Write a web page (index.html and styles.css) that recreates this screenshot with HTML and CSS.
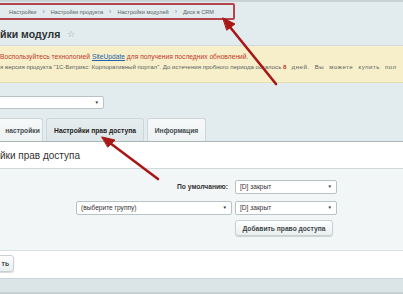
FILE: index.html
```html
<!DOCTYPE html>
<html lang="ru">
<head>
<meta charset="utf-8">
<link rel="stylesheet" href="styles.css">
</head>
<body>
<div class="page">
  <div class="topline"></div>
  <div class="crumbs">
    <div class="crumbbox">
      <span class="crumb">Настройки</span><span class="sep">›</span>
      <span class="crumb">Настройки продукта</span><span class="sep">›</span>
      <span class="crumb">Настройки модулей</span><span class="sep">›</span>
      <span class="crumb">Диск в CRM</span>
    </div>
  </div>
  <div class="titlebar">
    <h1 class="title">йки модуля</h1><span class="star">☆</span>
  </div>
  <div class="notice">
    <p class="warn">Воспользуйтесь технологией <a class="link">SiteUpdate</a> для получения последних обновлений.</p>
    <p class="info">я версия продукта "1С-Битрикс: Корпоративный портал". До истечения пробного периода осталось <b class="days">8</b><span class="tail"> дней. Вы можете купить пол</span></p>
  </div>
  <div class="filter">
    <div class="select site"><span class="arr">▼</span></div>
  </div>
  <div class="tabs">
    <div class="tab first">настройки</div>
    <div class="tab active">Настройки прав доступа</div>
    <div class="tab last">Информация</div>
  </div>
  <div class="panel-head">йки прав доступа</div>
  <div class="form">
    <div class="grid">
      <div class="label">По умолчанию:</div>
      <div class="select">[D] закрыт<span class="arr">▼</span></div>
      <div class="select">(выберите группу)<span class="arr">▼</span></div>
      <div class="select">[D] закрыт<span class="arr">▼</span></div>
      <div></div>
      <div class="btn add">Добавить право доступа</div>
    </div>
  </div>
  <div class="actions">
    <div class="btn save">ть</div>
  </div>
  <div class="bottom"></div>
  <svg class="arrows" width="403" height="294" viewBox="0 0 403 294">
    <g stroke="#a81616" stroke-width="2.6" fill="#a81616" stroke-linecap="round">
      <line x1="276" y1="84" x2="230" y2="27"/>
      <polygon points="223,18 235,24 227,30" stroke-width="1"/>
      <line x1="158" y1="179" x2="110" y2="143"/>
      <polygon points="102,137 115,140 108,147" stroke-width="1"/>
    </g>
  </svg>
</div>
</body>
</html>
```

FILE: styles.css
```css
* { box-sizing: border-box; }
html, body { margin: 0; padding: 0; }
body {
  font-family: "Liberation Sans", Arial, sans-serif;
  background: #e2ebed;
  width: 403px;
  height: 294px;
  overflow: hidden;
}
.page { position: relative; width: 403px; height: 294px; overflow: hidden; }

.topline { height: 2px; background: #c9d2d5; }

.crumbs { height: 18px; padding-top: 1px; }
.crumbbox {
  width: 237px;
  height: 17px;
  margin-left: -2px;
  border: 2px solid #b3454c;
  border-radius: 2px;
  display: flex;
  align-items: center;
  gap: 6px;
  padding-left: 9px;
  font-size: 5.6px;
  color: #5a6366;
  white-space: nowrap;
}
.sep { color: #8a9396; font-size: 7px; }

.titlebar {
  height: 26px;
  display: flex;
  align-items: center;
  gap: 7px;
  padding-top: 2px;
  border-bottom: 1px solid #d3dbdd;
}
.title { margin: 0; font-size: 10.5px; font-weight: bold; color: #2c3335; white-space: nowrap; }
.star { font-size: 9px; color: #9aa4a7; }

.notice {
  height: 37px;
  background: #f6efca;
  border-bottom: 1px solid #e6dfb5;
  padding-top: 6px;
}
.notice p { margin: 0; line-height: 10px; white-space: nowrap; }
.warn { color: #c0392b; font-size: 6.7px; }
.link { color: #2463a8; text-decoration: underline; }
.info { color: #5c6264; font-size: 6.1px; }
.days { color: #c0392b; }
.tail { letter-spacing: 0.5px; word-spacing: 3px; }

.filter { height: 33px; padding-top: 13px; }

.select {
  position: relative;
  height: 14px;
  background: #fff;
  border: 1px solid #b9c3c6;
  border-radius: 2px;
  font-size: 6.6px;
  color: #333;
  line-height: 12px;
  padding-left: 4px;
  white-space: nowrap;
}
.arr { position: absolute; right: 4px; top: 0; font-size: 4.5px; color: #333; }
.select.site { width: 106px; height: 13px; margin-left: -2px; }

.tabs {
  height: 26px;
  display: flex;
  align-items: flex-end;
  gap: 3px;
  border-bottom: 1px solid #a9b4b8;
}
.tab {
  height: 23px;
  flex: none;
  display: flex;
  align-items: center;
  justify-content: center;
  background: linear-gradient(#f7f9f9, #eef2f3);
  border: 1px solid #cdd6d9;
  border-bottom: none;
  border-radius: 3px 3px 0 0;
  font-size: 6.7px;
  font-weight: bold;
  color: #434c4f;
  white-space: nowrap;
}
.tab.first { width: 46px; margin-left: -3px; padding-left: 5px; }
.tab.active { width: 98px; background: linear-gradient(#e6edef, #dde6e8); color: #222; }
.tab.last { width: 59px; }

.panel-head {
  height: 26px;
  background: #fff;
  font-size: 10px;
  color: #333;
  display: flex;
  align-items: center;
  white-space: nowrap;
}

.form {
  height: 82px;
  background: #f3f6f7;
  border-top: 1px solid #d2d9dc;
  padding-top: 11px;
}
.grid {
  margin-left: 76px;
  display: grid;
  grid-template-columns: 156px 102px;
  column-gap: 3px;
  row-gap: 7px;
}
.label {
  text-align: right;
  font-size: 6.7px;
  font-weight: bold;
  color: #333;
  line-height: 14px;
  padding-right: 4px;
  white-space: nowrap;
}
.btn {
  height: 16px;
  border: 1px solid #c8d0d3;
  border-radius: 3px;
  background: linear-gradient(#ffffff, #e9eeef);
  box-shadow: 0 1px 1px rgba(0,0,0,0.15);
  font-size: 6.7px;
  font-weight: bold;
  color: #3d4649;
  display: flex;
  align-items: center;
  justify-content: center;
  white-space: nowrap;
}
.btn.add { width: 98px; margin-top: -2px; }

.actions {
  height: 28px;
  background: #fff;
  border-top: 1px solid #d9e1e3;
  padding-top: 4px;
}
.btn.save { width: 18px; height: 17px; margin-left: -4px; justify-content: flex-end; padding-right: 4px; }

.bottom { height: 16px; background: #dbe4e7; border-top: 1px solid #ccd5d8; border-bottom: 2px solid #c6cfd2; }

.arrows { position: absolute; left: 0; top: 0; pointer-events: none; }
```
